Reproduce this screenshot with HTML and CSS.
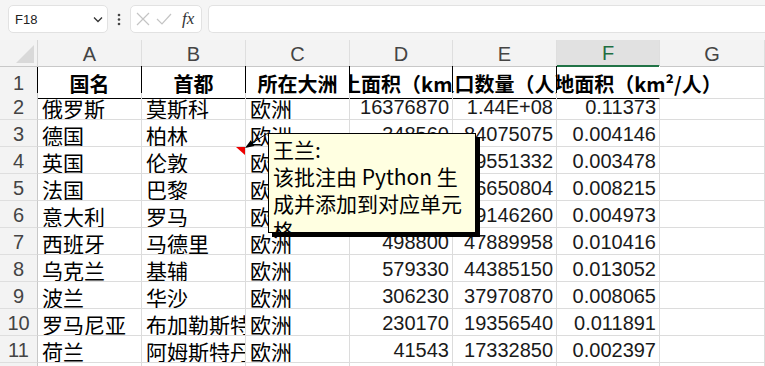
FILE: index.html
```html
<!DOCTYPE html>
<html lang="zh-CN">

<head>
    <meta charset="UTF-8">
    <meta name="viewport" content="width=device-width, initial-scale=1.0">
    <title>Sheet1</title>
    <link rel="stylesheet" href="styles.css">
</head>

<body>
    <div class="formula-bar">
        <div class="name-box">
            <span>F18</span>
            <svg width="10" height="7" viewBox="0 0 10 7"><polyline points="1,1.5 5,5.5 9,1.5" fill="none" stroke="#333" stroke-width="1.3"/></svg>
        </div>
        <div class="dots">
            <svg width="4" height="13" viewBox="0 0 4 13"><circle cx="2" cy="2" r="1.3" fill="#444"/><circle cx="2" cy="6.5" r="1.3" fill="#444"/><circle cx="2" cy="11" r="1.3" fill="#444"/></svg>
        </div>
        <div class="fx-box">
            <svg width="14" height="14" viewBox="0 0 14 14"><path d="M1 1 L13 13 M13 1 L1 13" stroke="#c4c4c4" stroke-width="1.2"/></svg>
            <svg width="16" height="12" viewBox="0 0 16 12"><polyline points="1,6 6,11 15,1" fill="none" stroke="#c4c4c4" stroke-width="1.2"/></svg>
            <span class="fx">fx</span>
        </div>
        <div class="formula-input"></div>
    </div>

    <div class="sheet">
        <div class="row col-head">
            <div class="corner"><span class="corner-tri"></span></div>
            <div class="ch">A</div>
            <div class="ch">B</div>
            <div class="ch">C</div>
            <div class="ch">D</div>
            <div class="ch">E</div>
            <div class="ch active">F</div>
            <div class="ch">G</div>
        </div>

        <div class="row title">
            <div class="rh">1</div>
            <div class="c hd"><span>国名</span></div>
            <div class="c hd"><span>首都</span></div>
            <div class="c hd"><span>所在大洲</span></div>
            <div class="c hd"><span>国土面积（km²）</span></div>
            <div class="c hd"><span>人口数量（人）</span></div>
            <div class="c hd last"><span>人均土地面积（km²/人）</span></div>
            <div class="c"></div>
        </div>

        <div class="row">
            <div class="rh">2</div>
            <div class="c">俄罗斯</div><div class="c">莫斯科</div><div class="c">欧洲</div>
            <div class="c num">16376870</div><div class="c num">1.44E+08</div><div class="c num">0.11373</div><div class="c"></div>
        </div>
        <div class="row">
            <div class="rh">3</div>
            <div class="c">德国</div><div class="c">柏林</div><div class="c">欧洲</div>
            <div class="c num">348560</div><div class="c num">84075075</div><div class="c num">0.004146</div><div class="c"></div>
        </div>
        <div class="row">
            <div class="rh">4</div>
            <div class="c">英国</div><div class="c noted">伦敦<span class="note-mark"></span></div><div class="c">欧洲</div>
            <div class="c num">241930</div><div class="c num">69551332</div><div class="c num">0.003478</div><div class="c"></div>
        </div>
        <div class="row">
            <div class="rh">5</div>
            <div class="c">法国</div><div class="c">巴黎</div><div class="c">欧洲</div>
            <div class="c num">547557</div><div class="c num">66650804</div><div class="c num">0.008215</div><div class="c"></div>
        </div>
        <div class="row">
            <div class="rh">6</div>
            <div class="c">意大利</div><div class="c">罗马</div><div class="c">欧洲</div>
            <div class="c num">294140</div><div class="c num">59146260</div><div class="c num">0.004973</div><div class="c"></div>
        </div>
        <div class="row">
            <div class="rh">7</div>
            <div class="c">西班牙</div><div class="c">马德里</div><div class="c">欧洲</div>
            <div class="c num">498800</div><div class="c num">47889958</div><div class="c num">0.010416</div><div class="c"></div>
        </div>
        <div class="row">
            <div class="rh">8</div>
            <div class="c">乌克兰</div><div class="c">基辅</div><div class="c">欧洲</div>
            <div class="c num">579330</div><div class="c num">44385150</div><div class="c num">0.013052</div><div class="c"></div>
        </div>
        <div class="row">
            <div class="rh">9</div>
            <div class="c">波兰</div><div class="c">华沙</div><div class="c">欧洲</div>
            <div class="c num">306230</div><div class="c num">37970870</div><div class="c num">0.008065</div><div class="c"></div>
        </div>
        <div class="row">
            <div class="rh">10</div>
            <div class="c">罗马尼亚</div><div class="c">布加勒斯特</div><div class="c">欧洲</div>
            <div class="c num">230170</div><div class="c num">19356540</div><div class="c num">0.011891</div><div class="c"></div>
        </div>
        <div class="row">
            <div class="rh">11</div>
            <div class="c">荷兰</div><div class="c">阿姆斯特丹</div><div class="c">欧洲</div>
            <div class="c num">41543</div><div class="c num">17332850</div><div class="c num">0.002397</div><div class="c"></div>
        </div>
        <div class="row short">
            <div class="rh"></div>
            <div class="c"></div><div class="c"></div><div class="c"></div>
            <div class="c"></div><div class="c"></div><div class="c"></div><div class="c"></div>
        </div>
    </div>

    <!-- comment on B4 -->
    <svg class="note-arrow" width="40" height="30" viewBox="0 0 40 30">
        <line x1="32" y1="5" x2="14" y2="16.5" stroke="#000" stroke-width="1"/>
        <polygon points="9,20 18.5,18.1 14.7,12.2" fill="#000"/>
    </svg>
    <div class="comment">
        王兰:<br>
        该批注由 Python 生<br>
        成并添加到对应单元<br>
        格
    </div>
</body>

</html>
```

FILE: styles.css
```css
body {
    margin: 0;
    background: #f5f5f5;
    font-family: "Noto Sans CJK SC", "Liberation Sans", sans-serif;
    color: #000;
    overflow: hidden;
    position: relative;
}

/* formula bar */
.formula-bar {
    display: flex;
    align-items: flex-start;
    height: 40px;
    padding: 5px 0 0 8px;
    box-sizing: border-box;
    font-family: "Liberation Sans", Arial, sans-serif;
}

.name-box {
    width: 100px;
    height: 28px;
    box-sizing: border-box;
    background: #fff;
    border: 1px solid #e2e2e2;
    border-radius: 5px;
    display: flex;
    align-items: center;
    justify-content: space-between;
    padding: 0 4px 0 6px;
    font-size: 13px;
    color: #222;
}

.dots {
    width: 22px;
    height: 28px;
    display: flex;
    align-items: center;
    justify-content: center;
}

.fx-box {
    width: 72px;
    height: 28px;
    box-sizing: border-box;
    background: #fff;
    border: 1px solid #e2e2e2;
    border-radius: 5px;
    display: flex;
    align-items: center;
    gap: 6px;
    padding-left: 5px;
}

.fx {
    font-family: "Liberation Serif", serif;
    font-style: italic;
    font-size: 17px;
    color: #333;
    margin-left: 4px;
}

.formula-input {
    flex: 1;
    height: 28px;
    margin-left: 6px;
    box-sizing: border-box;
    background: #fff;
    border: 1px solid #e2e2e2;
    border-right: none;
    border-radius: 5px 0 0 5px;
}

/* sheet grid */
.sheet {
    background: #fff;
}

.row {
    display: grid;
    grid-template-columns: 38px 104px 104px 104px 103px 104px 103px 1fr;
    height: 27px;
}

.row.short {
    height: 6px;
}

.col-head {
    height: 26px;
    background: #f3f3f3;
}

.corner {
    position: relative;
    border-right: 1px solid #d6d6d6;
    border-bottom: 1px solid #c8c8c8;
}

.corner-tri {
    position: absolute;
    right: 3px;
    bottom: 3px;
    width: 18px;
    height: 18px;
    background: #d9d9d9;
    clip-path: polygon(100% 0, 100% 100%, 0 100%);
}

.ch {
    display: flex;
    align-items: center;
    justify-content: center;
    font-family: "Liberation Sans", Arial, sans-serif;
    font-size: 20px;
    color: #444;
    border-right: 1px solid #dedede;
    border-bottom: 1px solid #c8c8c8;
    padding-top: 2px;
    box-sizing: border-box;
}

.ch.active {
    background: #e1e1e1;
    color: #1e6e42;
    border-bottom: 2px solid #217346;
}

.rh {
    display: flex;
    align-items: center;
    justify-content: center;
    background: #f3f3f3;
    font-family: "Liberation Sans", Arial, sans-serif;
    font-size: 20px;
    color: #444;
    border-right: 1px solid #c8c8c8;
    border-bottom: 1px solid #dedede;
    padding-top: 2px;
    box-sizing: border-box;
}

.c {
    position: relative;
    display: flex;
    align-items: center;
    overflow: hidden;
    white-space: nowrap;
    font-size: 21px;
    border-right: 1px solid #dcdcdc;
    border-bottom: 1px solid #dcdcdc;
    padding: 3px 3px 0 4px;
    box-sizing: border-box;
}

.num {
    justify-content: flex-end;
    font-family: "Liberation Sans", Arial, sans-serif;
    font-size: 20px;
    color: #1a1a1a;
    padding-top: 2px;
}

/* title row */
.title .rh {
    border-right-color: #000;
}

.hd {
    justify-content: center;
    font-size: 20px;
    font-weight: bold;
    border-right-color: #000;
    border-bottom-color: #000;
    padding-left: 0;
    padding-right: 0;
}

.hd span {
    flex-shrink: 0;
}

.hd.last {
    overflow: visible;
    clip-path: inset(0 -300px 0 0);
    border-right-color: #fff;
    z-index: 1;
}

/* comment */
.note-mark {
    position: absolute;
    top: 0;
    right: 0;
    width: 9px;
    height: 8px;
    background: #e00;
    clip-path: polygon(0 0, 100% 0, 100% 100%);
}

.note-arrow {
    position: absolute;
    left: 236px;
    top: 128px;
}

.comment {
    position: absolute;
    left: 268px;
    top: 133px;
    width: 208px;
    height: 100px;
    box-sizing: border-box;
    background: #ffffe1;
    border: 1px solid #000;
    box-shadow: 4px 4px 0 #000;
    padding: 2px 0 0 4px;
    font-size: 21px;
    line-height: 27px;
    white-space: nowrap;
    overflow: hidden;
}
```
